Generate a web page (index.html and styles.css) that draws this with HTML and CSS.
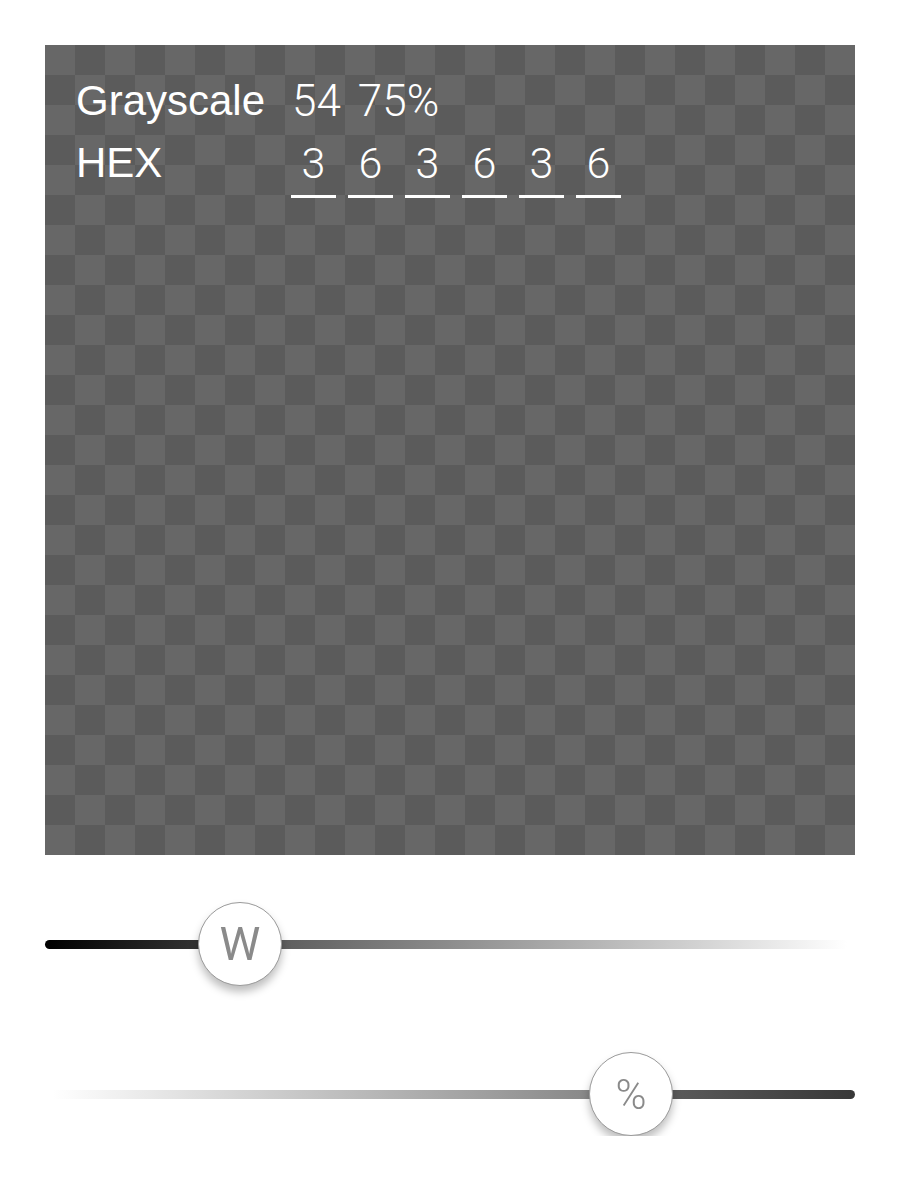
FILE: index.html
```html
<!DOCTYPE html>
<html>
<head>
<meta charset="utf-8">
<link rel="stylesheet" href="styles.css">
</head>
<body>
  <div class="panel">
    <div class="row">
      <div class="label">Grayscale</div>
      <div class="values">
        <span class="val">54</span>
        <span class="val">75%</span>
      </div>
    </div>
    <div class="row">
      <div class="label">HEX</div>
      <div class="hex">
        <span class="cell">3</span>
        <span class="cell">6</span>
        <span class="cell">3</span>
        <span class="cell">6</span>
        <span class="cell">3</span>
        <span class="cell">6</span>
      </div>
    </div>
  </div>

  <div class="sliders">
    <div class="slider">
      <div class="track track-w"></div>
      <div class="thumb" style="--v: 0.2407"><span class="glyph">W</span></div>
    </div>
    <div class="slider">
      <div class="track track-p"></div>
      <div class="thumb" style="--v: 0.7235"><span class="glyph pct">%</span></div>
    </div>
  </div>
</body>
</html>
```

FILE: styles.css
```css
html, body {
  margin: 0;
  padding: 0;
  background: #ffffff;
}

body {
  font-family: "Liberation Sans", Arial, sans-serif;
}

.panel {
  margin: 45px 0 0 45px;
  width: 810px;
  height: 810px;
  box-sizing: border-box;
  padding: 35px 0 0 31px;
  background: repeating-conic-gradient(#5b5b5b 0 25%, #676767 0 50%) 0 0 / 60px 60px;
  display: flex;
  flex-direction: column;
  gap: 20px;
  color: #ffffff;
}

.row {
  display: flex;
  align-items: flex-start;
}

.label {
  width: 215px;
  font-size: 42px;
  line-height: 42px;
}

.values {
  display: flex;
  gap: 17px;
  padding-left: 1px;
}

.val {
  font-family: Roboto, "Liberation Sans", sans-serif;
  font-weight: 300;
  font-size: 44px;
  line-height: 42px;
  color: #ffffff;
}

.hex {
  display: flex;
  gap: 12px;
}

.cell {
  width: 45px;
  text-align: center;
  font-family: Roboto, "Liberation Sans", sans-serif;
  font-weight: 300;
  font-size: 43px;
  line-height: 42px;
  padding-bottom: 11px;
  border-bottom: 3px solid #ffffff;
  color: #ffffff;
}

.sliders {
  margin: 47px 0 0 45px;
  width: 810px;
  display: flex;
  flex-direction: column;
  gap: 66px;
}

.slider {
  position: relative;
  height: 84px;
  display: flex;
  align-items: center;
}

.track {
  width: 100%;
  height: 9px;
  border-radius: 4.5px;
}

.track-w {
  background: linear-gradient(90deg, #000000 0%, #333333 19%, #5e5e5e 29.4%, #d3d3d3 81%, rgba(255, 255, 255, 0) 99%);
}

.track-p {
  background: linear-gradient(90deg, rgba(255, 255, 255, 0) 1%, #d4d4d4 24%, #888888 67.3%, #5a5a5a 77.5%, #383838 100%);
}

.thumb {
  position: absolute;
  top: 0;
  left: calc(var(--v) * 100% - 42px);
  width: 84px;
  height: 84px;
  box-sizing: border-box;
  border-radius: 50%;
  background: #ffffff;
  border: 1px solid #9a9a9a;
  box-shadow: 0 6px 9px rgba(0, 0, 0, 0.26);
  display: flex;
  align-items: center;
  justify-content: center;
}

.glyph {
  font-family: Roboto, "Liberation Sans", sans-serif;
  font-weight: 400;
  font-size: 46px;
  line-height: 1;
  color: #8a8a8a;
  filter: blur(0.7px);
}

.pct {
  font-weight: 300;
  font-size: 42px;
  margin-top: 2px;
}
```
